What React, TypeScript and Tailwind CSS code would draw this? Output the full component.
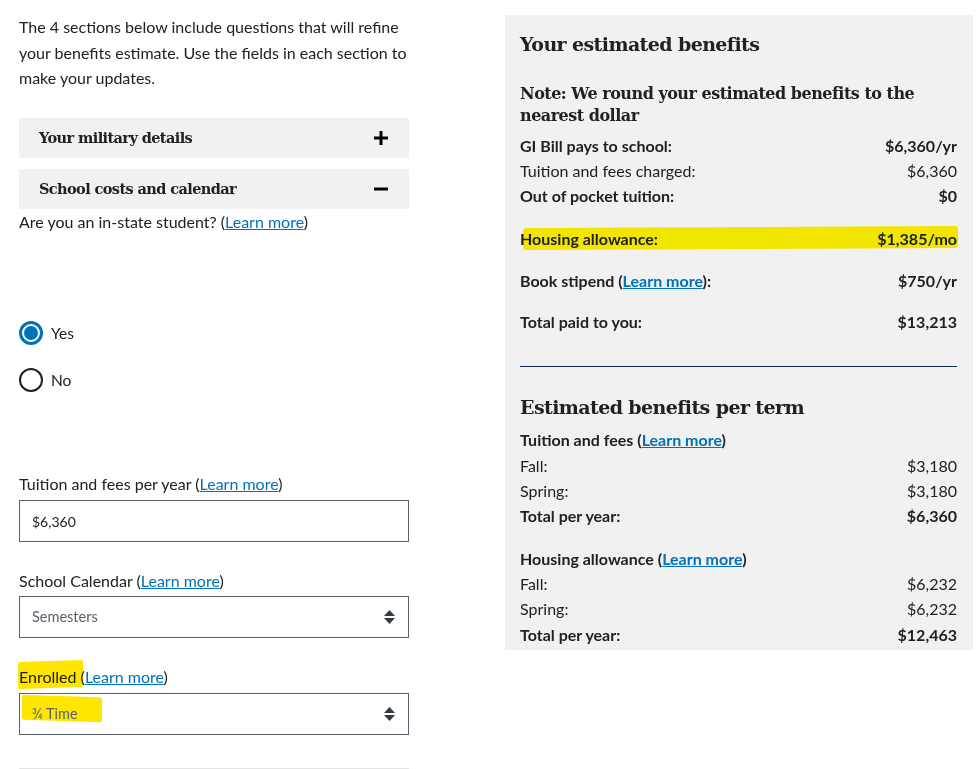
const sans = "font-['Lato',sans-serif]";
const serif = "font-['DejaVu_Serif',serif]";

function Learn() {
  return (
    <>
      (<a className="text-[#0071bb] underline">Learn more</a>)
    </>
  );
}

function Accordion({ title, open }: { title: string; open?: boolean }) {
  return (
    <div className="h-[40px] bg-[#f1f1f1] pl-[20px] pr-[21px] flex items-center justify-between">
      <span className={`${serif} font-bold text-[14.5px] tracking-[-0.6px]`}>{title}</span>
      <svg width="14" height="14" viewBox="0 0 14 14">
        <rect x="0" y="5.5" width="14" height="3" fill="#000" />
        {!open && <rect x="5.5" y="0" width="3" height="14" fill="#000" />}
      </svg>
    </div>
  );
}

function Radio({ label, checked }: { label: string; checked?: boolean }) {
  return (
    <div className="flex items-center gap-[8px] h-[25px]">
      {checked ? (
        <div className="w-[24px] h-[24px] rounded-full border-[3px] border-[#0071bb] p-[2px]">
          <div className="w-full h-full rounded-full bg-[#0071bb]" />
        </div>
      ) : (
        <div className="w-[24px] h-[24px] rounded-full border-2 border-[#212121]" />
      )}
      <span className="text-[15.5px]">{label}</span>
    </div>
  );
}

function Arrows() {
  return (
    <svg width="11" height="14" viewBox="0 0 11 14">
      <path d="M5.5 0 L11 6 H0 Z" fill="#323a45" />
      <path d="M0 8 H11 L5.5 14 Z" fill="#323a45" />
    </svg>
  );
}

function Row({
  label,
  value,
  bold,
  className = "",
}: {
  label: React.ReactNode;
  value: string;
  bold?: boolean;
  className?: string;
}) {
  return (
    <div className={`flex justify-between h-[25.3px] items-center ${bold ? "font-bold" : ""} ${className}`}>
      <span>{label}</span>
      <span>{value}</span>
    </div>
  );
}

export default function App() {
  return (
    <div className={`${sans} text-[#212121] bg-white w-[979px] h-[769px] overflow-hidden flex`}>
      <div className="w-[390px] ml-[19px] shrink-0">
        <p className="pt-[14px] text-[16px] leading-[25.6px]">
          The 4 sections below include questions that will refine your benefits estimate. Use the fields in each
          section to make your updates.
        </p>
        <div className="mt-[27px]">
          <Accordion title="Your military details" />
        </div>
        <div className="mt-[11px]">
          <Accordion title="School costs and calendar" open />
        </div>
        <div className="text-[16px] leading-[25px]">
          Are you an in-state student? <Learn />
        </div>
        <div className="mt-[87px] flex flex-col gap-[22px]">
          <Radio label="Yes" checked />
          <Radio label="No" />
        </div>

        <div className="mt-[78px] text-[16px] leading-[25px]">
          Tuition and fees per year <Learn />
        </div>
        <div className="mt-[4.5px] h-[42px] border border-[#5b616b] flex items-center px-[12px] text-[14px]">
          $6,360
        </div>

        <div className="mt-[25.5px] text-[16px] leading-[25px]">
          School Calendar <Learn />
        </div>
        <div className="mt-[3.5px] h-[42px] border border-[#5b616b] flex items-center justify-between pl-[12px] pr-[13px] text-[14.5px] text-[#5b616b]">
          Semesters
          <Arrows />
        </div>

        <div className="relative mt-[26px] text-[16px] leading-[25px]">
          <div className="absolute left-[-1px] top-[-3px] w-[65px] h-[27px] bg-[#ffe600] mix-blend-multiply rounded-[2px] skew-y-[-2deg]" />
          <span className="relative mix-blend-multiply">Enrolled</span> <Learn />
        </div>
        <div className="relative mt-[3.5px] h-[42px] border border-[#5b616b] flex items-center justify-between pl-[12px] pr-[13px] text-[14.5px] text-[#5b616b]">
          <div className="absolute left-[2px] top-[2px] w-[80px] h-[25px] bg-[#ffe600] rounded-[2px] skew-y-[2deg]" />
          <span className="relative">¾ Time</span>
          <Arrows />
        </div>
        <div className="mt-[33px] border-t border-[#e4e4e4]" />
      </div>

      <div className="ml-[96px] mt-[15px] w-[468px] self-start bg-[#f1f1f1] pl-[15px] pr-[16px] pt-[15px] pb-[3px] text-[16px]">
        <h2 className={`${serif} font-bold text-[19px] leading-[28px] tracking-[-0.6px]`}>Your estimated benefits</h2>
        <p className={`${serif} font-bold text-[16px] leading-[22px] mt-[25px] tracking-[-0.5px]`}>
          Note: We round your estimated benefits to the nearest dollar
        </p>
        <div className="mt-[6px]">
          <Row label="GI Bill pays to school:" value="$6,360/yr" bold />
          <Row label="Tuition and fees charged:" value="$6,360" />
          <Row label="Out of pocket tuition:" value="$0" bold />
          <div className="relative mt-[17px]">
            <div className="absolute left-[3px] right-[-1px] top-[1px] h-[22px] bg-[#f2e600] rounded-[3px] -rotate-[0.3deg]" />
            <Row label="Housing allowance:" value="$1,385/mo" bold className="relative" />
          </div>
          <Row
            label={
              <>
                Book stipend <Learn />:
              </>
            }
            value="$750/yr"
            bold
            className="mt-[17px]"
          />
          <Row label="Total paid to you:" value="$13,213" bold className="mt-[16px]" />
        </div>
        <div className="mt-[31px] border-t border-[#112e51]" />
        <h2 className={`${serif} font-bold text-[19px] leading-[28px] mt-[26px] tracking-[-0.6px]`}>
          Estimated benefits per term
        </h2>
        <div className="mt-[7px]">
          <div className="font-bold h-[25.3px] flex items-center">
            <span>
              Tuition and fees <Learn />
            </span>
          </div>
          <Row label="Fall:" value="$3,180" />
          <Row label="Spring:" value="$3,180" />
          <Row label="Total per year:" value="$6,360" bold />
          <div className="font-bold h-[25.3px] flex items-center mt-[17px]">
            <span>
              Housing allowance <Learn />
            </span>
          </div>
          <Row label="Fall:" value="$6,232" />
          <Row label="Spring:" value="$6,232" />
          <Row label="Total per year:" value="$12,463" bold />
        </div>
      </div>
    </div>
  );
}
